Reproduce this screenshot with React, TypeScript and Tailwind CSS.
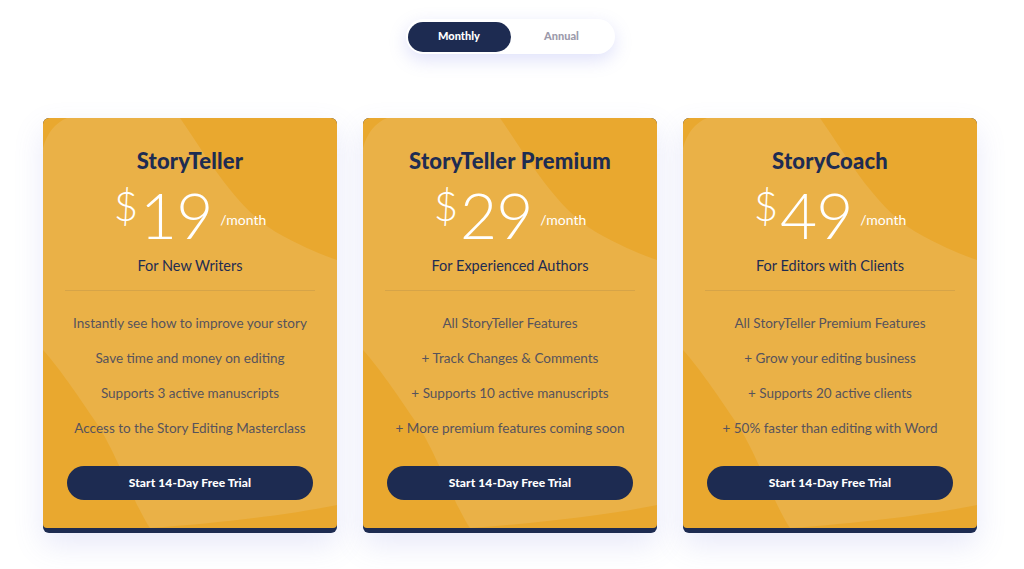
import React from "react";

const plans = [
  {
    name: "StoryTeller",
    price: "19",
    sub: "For New Writers",
    features: [
      "Instantly see how to improve your story",
      "Save time and money on editing",
      "Supports 3 active manuscripts",
      "Access to the Story Editing Masterclass",
    ],
  },
  {
    name: "StoryTeller Premium",
    price: "29",
    sub: "For Experienced Authors",
    features: [
      "All StoryTeller Features",
      "+ Track Changes & Comments",
      "+ Supports 10 active manuscripts",
      "+ More premium features coming soon",
    ],
  },
  {
    name: "StoryCoach",
    price: "49",
    sub: "For Editors with Clients",
    features: [
      "All StoryTeller Premium Features",
      "+ Grow your editing business",
      "+ Supports 20 active clients",
      "+ 50% faster than editing with Word",
    ],
  },
];

function Blob() {
  return (
    <svg
      className="absolute inset-0 w-full h-full"
      viewBox="0 0 294 410"
      preserveAspectRatio="none"
      aria-hidden="true"
    >
      <path
        d="M24,0 L137,0 C165,40 195,95 240,118 C262,130 280,137 294,142 L294,387 C250,396 180,405 107,410 C90,385 72,330 50,300 C30,270 12,245 0,232 L0,30 C4,15 12,5 24,0 Z"
        fill="#eab147"
      />
    </svg>
  );
}

function Card({ plan }: { plan: (typeof plans)[number] }) {
  return (
    <div className="w-[294px] rounded-[6px] bg-[#1d2b51] pb-[5px] shadow-[0_12px_30px_rgba(110,120,220,0.16)]">
      <div className="relative h-[410px] overflow-hidden rounded-t-[6px] rounded-b-[4px] bg-[#e9a82f]">
        <Blob />
        <div className="relative flex flex-col items-center pt-[28px]">
          <div className="text-[22px] leading-[29px] font-black text-[#1e2c52] tracking-[0.2px]">
            {plan.name}
          </div>
          <div className="mt-[5px] flex h-[70px] items-start text-white">
            <span className="mt-[5px] text-[42px] leading-[40px] font-light">$</span>
            <span className="ml-[2px] text-[64px] leading-[70px] font-light tracking-[-1px]">
              {plan.price}
            </span>
            <span className="ml-[8px] mt-[30px] text-[14px] leading-[20px] font-normal">
              /month
            </span>
          </div>
          <div className="mt-[5px] text-[14.5px] leading-[22px] text-[#1e2c52] font-normal">
            {plan.sub}
          </div>
          <div className="mt-[13px] h-px w-[250px] bg-[#d6a448]" />
          <div className="mt-[22px] flex flex-col items-center gap-[15px]">
            {plan.features.map((f) => (
              <div
                key={f}
                className="text-[13.5px] leading-[20px] font-normal text-[#57535c]"
              >
                {f}
              </div>
            ))}
          </div>
          <button className="mt-[28px] h-[34px] w-[246px] rounded-full bg-[#1d2b51] text-[12px] font-black text-white tracking-[0.1px]">
            Start 14-Day Free Trial
          </button>
        </div>
      </div>
    </div>
  );
}

export default function App() {
  return (
    <div
      className="min-h-[569px] w-full bg-white"
      style={{ fontFamily: "Lato, 'Noto Sans', sans-serif" }}
    >
      <div className="flex justify-center pt-[19px] pr-[4px]">
        <div className="flex h-[35px] w-[209px] items-center rounded-full bg-white px-[2px] shadow-[0_6px_18px_rgba(110,120,230,0.22)]">
          <div className="flex h-[30px] w-[103px] items-center justify-center rounded-full bg-[#1d2b51] text-[11px] font-black text-white">
            Monthly
          </div>
          <div className="flex flex-1 items-center justify-center text-[11px] font-black text-[#9c9aab]">
            Annual
          </div>
        </div>
      </div>
      <div className="mt-[64px] flex justify-center gap-[26px] pr-[4px]">
        {plans.map((p) => (
          <Card key={p.name} plan={p} />
        ))}
      </div>
    </div>
  );
}
